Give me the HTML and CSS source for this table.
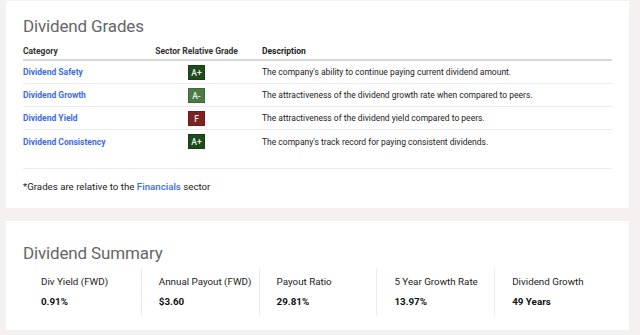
FILE: index.html
```html
<!DOCTYPE html>
<html lang="en">
<head>
<meta charset="utf-8">
<title>Dividend Grades</title>
<link rel="stylesheet" href="styles.css">
</head>
<body>
<section class="card grades">
  <h2 class="card-title">Dividend Grades</h2>
  <div class="grade-table">
    <div class="row head">
      <div class="c-cat">Category</div>
      <div class="c-grade">Sector Relative Grade</div>
      <div class="c-desc">Description</div>
    </div>
    <div class="row">
      <div class="c-cat"><a class="link" href="#">Dividend Safety</a></div>
      <div class="c-grade"><span class="badge g-dark">A+</span></div>
      <div class="c-desc">The company's ability to continue paying current dividend amount.</div>
    </div>
    <div class="row">
      <div class="c-cat"><a class="link" href="#">Dividend Growth</a></div>
      <div class="c-grade"><span class="badge g-light">A-</span></div>
      <div class="c-desc">The attractiveness of the dividend growth rate when compared to peers.</div>
    </div>
    <div class="row">
      <div class="c-cat"><a class="link" href="#">Dividend Yield</a></div>
      <div class="c-grade"><span class="badge g-red">F</span></div>
      <div class="c-desc">The attractiveness of the dividend yield compared to peers.</div>
    </div>
    <div class="row last">
      <div class="c-cat"><a class="link" href="#">Dividend Consistency</a></div>
      <div class="c-grade"><span class="badge g-dark">A+</span></div>
      <div class="c-desc">The company's track record for paying consistent dividends.</div>
    </div>
  </div>
  <p class="footnote">*Grades are relative to the <a class="sector" href="#">Financials</a> sector</p>
</section>

<section class="card summary">
  <h2 class="card-title">Dividend Summary</h2>
  <div class="metrics">
    <div class="metric">
      <div class="m-label">Div Yield (FWD)</div>
      <div class="m-value">0.91%</div>
    </div>
    <div class="metric">
      <div class="m-label">Annual Payout (FWD)</div>
      <div class="m-value">$3.60</div>
    </div>
    <div class="metric">
      <div class="m-label">Payout Ratio</div>
      <div class="m-value">29.81%</div>
    </div>
    <div class="metric">
      <div class="m-label">5 Year Growth Rate</div>
      <div class="m-value">13.97%</div>
    </div>
    <div class="metric">
      <div class="m-label">Dividend Growth</div>
      <div class="m-value">49 Years</div>
    </div>
  </div>
</section>
</body>
</html>
```

FILE: styles.css
```css
* { box-sizing: border-box; }

html, body {
  margin: 0;
  padding: 0;
}

body {
  background: #f4f1f0;
  font-family: Roboto, "Liberation Sans", Arial, sans-serif;
  color: #222;
  padding: 1px 11px 5px 6px;
}

.card {
  background: #fff;
  padding: 0 17px;
}

.card-title {
  margin: 0;
  font-size: 17px;
  letter-spacing: -0.15px;
  font-weight: 400;
  line-height: 24px;
  color: #666;
}

.grades {
  height: 207px;
  padding-top: 13px;
}

.grade-table {
  margin-top: 1px;
}

.row {
  display: grid;
  grid-template-columns: 128px 91px 1fr;
  align-items: center;
  height: 23px;
  border-bottom: 1px solid #ececec;
  font-size: 8.5px;
}

.row.head {
  height: 22px;
  padding-top: 3px;
  border-bottom: 2px solid #d6d9d9;
  font-weight: 700;
  font-size: 8.5px;
  color: #333;
  white-space: nowrap;
}

.row.last {
  border-bottom: 0;
}

.c-grade {
  text-align: center;
}

.c-desc {
  padding-left: 20px;
  color: #222;
}

.link {
  color: #3d6ce0;
  font-weight: 700;
  text-decoration: none;
}

.badge {
  display: inline-block;
  width: 17px;
  height: 15px;
  line-height: 14px;
  text-align: center;
  color: #e8efe6;
  font-size: 8.5px;
  font-weight: 500;
  vertical-align: middle;
  border: 1px solid rgba(0,0,0,0.15);
}

.g-dark { background: #1f4a1b; }
.g-light { background: #4c7b46; }
.g-red { background: #7c2222; }

.footnote {
  margin: 15px 0 0;
  border-top: 1px solid #ececec;
  padding-top: 11px;
  font-size: 9.7px;
  line-height: 14px;
  color: #222;
}

.sector {
  color: #3d6ce0;
  font-weight: 500;
  text-decoration: none;
}

.summary {
  margin-top: 13px;
  height: 109px;
  padding-top: 20px;
}

.metrics {
  display: grid;
  grid-template-columns: repeat(5, 1fr);
  margin-top: 3px;
}

.metric {
  height: 48px;
  padding: 7px 0 0 17px;
  border-left: 1px solid #ececec;
}

.metric:first-child {
  border-left-color: transparent;
}

.m-label {
  font-size: 9.8px;
  line-height: 13px;
  color: #222;
}

.m-value {
  margin-top: 7px;
  font-size: 9.8px;
  line-height: 13px;
  font-weight: 700;
  color: #111;
}
```
